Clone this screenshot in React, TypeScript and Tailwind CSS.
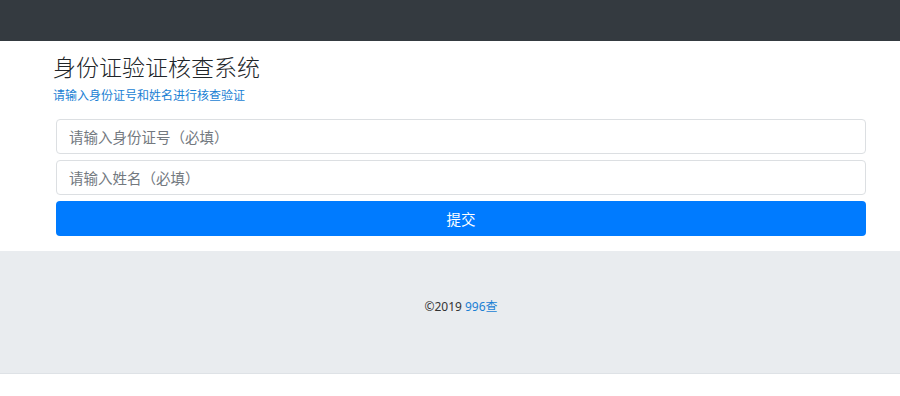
export default function App() {
  return (
    <div className="min-h-[396px] bg-white" style={{ fontFamily: '"Microsoft YaHei", "Noto Sans CJK SC", sans-serif' }}>
      <div className="h-[41px] bg-[#343a40]" />

      <div className="pl-[53px] pr-[34px] pt-[10px] pb-[15px]">
        <h1 className="text-[23px] leading-[30px] font-light text-[#212529]">身份证验证核查系统</h1>
        <p className="mt-[6px] text-[12px] leading-[16px] text-[#1a7fd4]">请输入身份证号和姓名进行核查验证</p>

        <form className="mt-[16px] ml-[3px] flex flex-col gap-[6px]">
          <input
            className="h-[35px] w-full rounded-[4px] border border-[#dcdfe2] px-[12px] text-[14.5px] text-[#495057] placeholder:text-[#73797f] outline-none"
            placeholder="请输入身份证号（必填）"
          />
          <input
            className="h-[35px] w-full rounded-[4px] border border-[#dcdfe2] px-[12px] text-[14.5px] text-[#495057] placeholder:text-[#73797f] outline-none"
            placeholder="请输入姓名（必填）"
          />
          <button
            type="button"
            className="h-[35px] w-full rounded-[4px] bg-[#007bff] text-[14.5px] text-white"
          >
            提交
          </button>
        </form>
      </div>

      <footer className="h-[123px] bg-[#e9ecef] border-b border-[#dee2e6] pl-[56px] pr-[34px] pt-[48px]">
        <p className="text-center text-[12px] leading-[16px] text-[#333]" style={{ fontFamily: '"Noto Sans", "Noto Sans CJK SC", sans-serif' }}>
          ©2019 <a className="text-[#1a7fd4]">996查</a>
        </p>
      </footer>
    </div>
  );
}
